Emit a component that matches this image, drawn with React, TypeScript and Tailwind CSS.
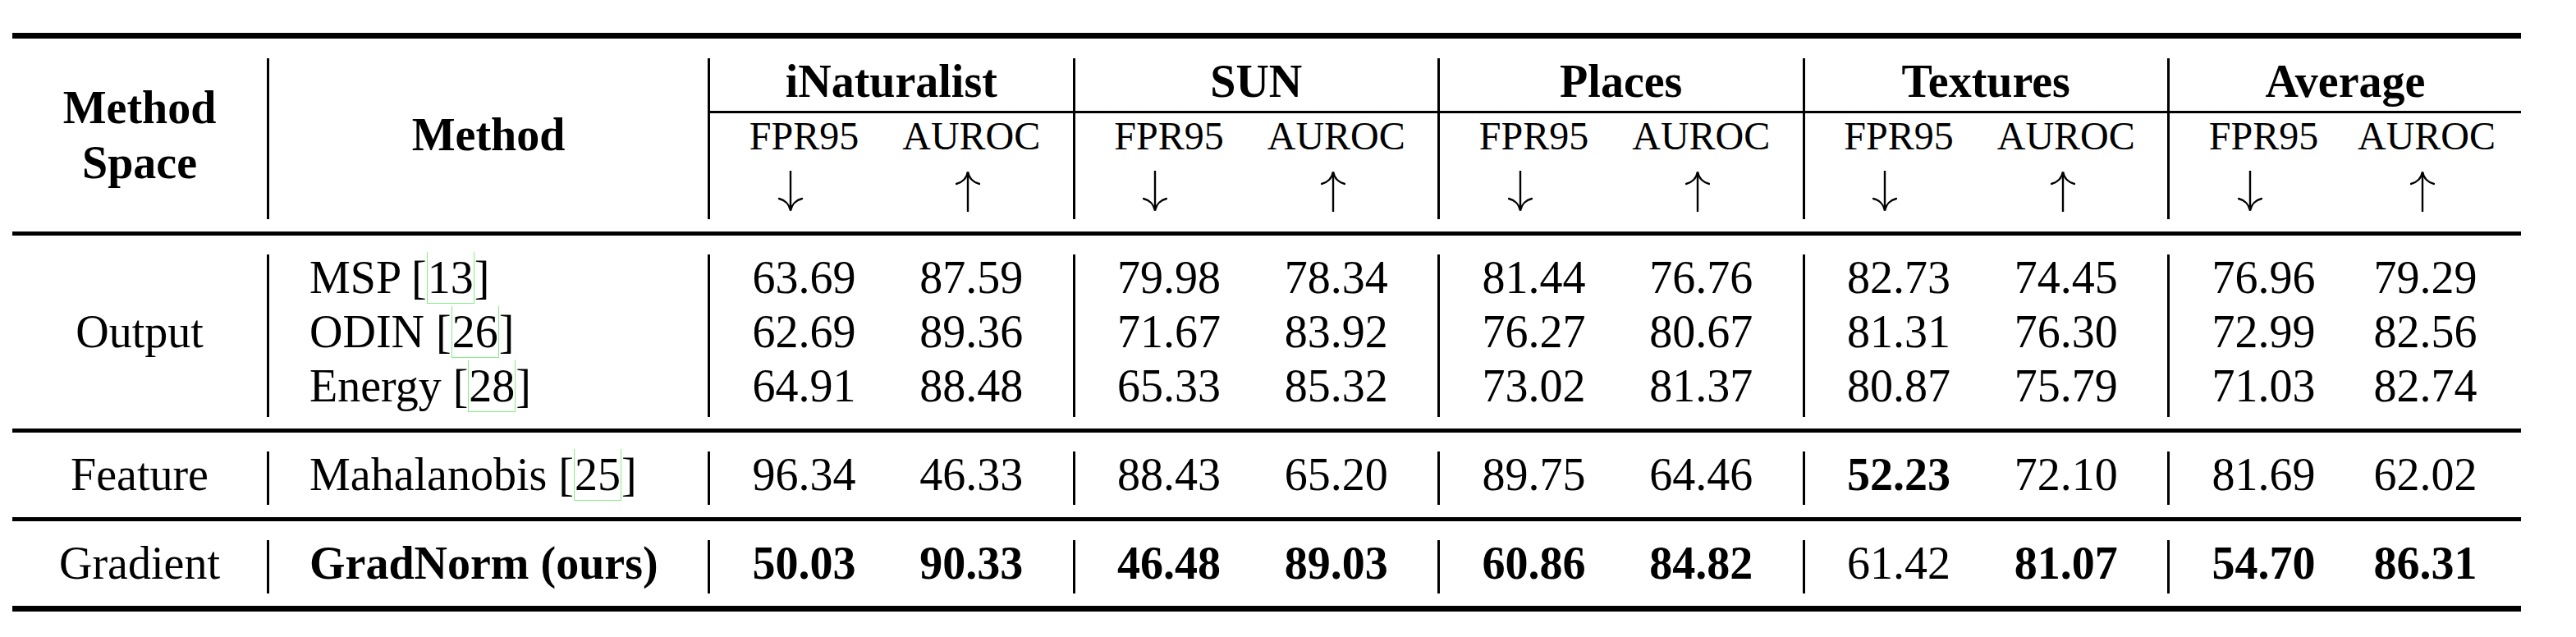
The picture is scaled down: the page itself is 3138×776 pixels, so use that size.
import React from "react";

// results table: OOD detection, ImageNet benchmark
const GROUPS = ["iNaturalist", "SUN", "Places", "Textures", "Average"];

type Row = {
  space?: string;
  method: string;
  cite?: string;
  bold?: boolean;
  vals: string[];
  strong: number[]; // indices of bold values
};

const SECTIONS: Row[][] = [
  [
    {
      method: "MSP",
      cite: "13",
      vals: ["63.69", "87.59", "79.98", "78.34", "81.44", "76.76", "82.73", "74.45", "76.96", "79.29"],
      strong: [],
    },
    {
      space: "Output",
      method: "ODIN",
      cite: "26",
      vals: ["62.69", "89.36", "71.67", "83.92", "76.27", "80.67", "81.31", "76.30", "72.99", "82.56"],
      strong: [],
    },
    {
      method: "Energy",
      cite: "28",
      vals: ["64.91", "88.48", "65.33", "85.32", "73.02", "81.37", "80.87", "75.79", "71.03", "82.74"],
      strong: [],
    },
  ],
  [
    {
      space: "Feature",
      method: "Mahalanobis",
      cite: "25",
      vals: ["96.34", "46.33", "88.43", "65.20", "89.75", "64.46", "52.23", "72.10", "81.69", "62.02"],
      strong: [6],
    },
  ],
  [
    {
      space: "Gradient",
      method: "GradNorm (ours)",
      bold: true,
      vals: ["50.03", "90.33", "46.48", "89.03", "60.86", "84.82", "61.42", "81.07", "54.70", "86.31"],
      strong: [0, 1, 2, 3, 4, 5, 7, 8, 9],
    },
  ],
];

const COLS =
  "grid grid-cols-[310px_537px_232px_212.5px_232px_212.5px_232px_212.5px_232px_212.5px_232px_199px]";

function Arrow({ up }: { up?: boolean }) {
  return (
    <svg width="30" height="50" viewBox="0 0 30 50" className={up ? "block" : "block rotate-180"}>
      <path d="M15 1.5V50" stroke="black" strokeWidth="2.4" fill="none" />
      <path
        d="M1 16C8 14.5 13.5 9 15 1.5C16.5 9 22 14.5 29 16"
        stroke="black"
        strokeWidth="2.4"
        fill="none"
        strokeLinecap="round"
      />
    </svg>
  );
}

function Cite({ n }: { n: string }) {
  return (
    <span>
      [<span className="border-x border-b border-[#86ee86]">{n}</span>]
    </span>
  );
}

function Header() {
  return (
    <div className={`${COLS} grid-rows-[67px_66px_63px]`}>
      <div className="row-span-3 pt-[27px] text-center font-bold leading-[67px]">
        Method
        <br />
        Space
      </div>
      <div className="row-span-3 border-l-[3px] border-black pt-[65px] text-center font-bold leading-[56px]">
        Method
      </div>
      {GROUPS.map((g) => (
        <div
          key={g}
          className="col-span-2 border-l-[3px] border-b-[3px] border-black text-center font-bold leading-[56px]"
        >
          {g}
        </div>
      ))}
      {GROUPS.map((g) => (
        <React.Fragment key={g + "-m"}>
          <div className="border-l-[3px] border-black pt-[4px] text-center text-[48px] leading-[48px]">
            FPR95
          </div>
          <div className="pr-[34px] pt-[4px] text-center text-[48px] leading-[48px]">AUROC</div>
        </React.Fragment>
      ))}
      {GROUPS.map((g) => (
        <React.Fragment key={g + "-a"}>
          <div className="flex justify-center border-l-[3px] border-black pt-[4px]">
            <span className="mr-[34px]">
              <Arrow />
            </span>
          </div>
          <div className="flex justify-center pr-[34px] pt-[4px]">
            <span className="mr-[8px]">
              <Arrow up />
            </span>
          </div>
        </React.Fragment>
      ))}
    </div>
  );
}

function Section({ rows, last }: { rows: Row[]; last?: boolean }) {
  const tall = rows.length > 1;
  return (
    <>
      <div className={tall ? "pt-[23px] pb-[14px]" : "pt-[23px] pb-[15px]"}>
        {rows.map((r) => (
          <div key={r.method} className={`${COLS} ${tall ? "h-[66px]" : "h-[65px]"} leading-[56px]`}>
            <div className="text-center">{r.space}</div>
            <div className={`border-l-[3px] border-black pl-[49px] ${r.bold ? "font-bold" : ""}`}>
              {r.method}
              {r.cite && (
                <>
                  {" "}
                  <Cite n={r.cite} />
                </>
              )}
            </div>
            {r.vals.map((v, i) => (
              <div
                key={i}
                className={`text-center ${i % 2 === 0 ? "border-l-[3px] border-black" : "pr-[34px]"} ${
                  r.strong.includes(i) ? "font-bold" : ""
                }`}
              >
                {v}
              </div>
            ))}
          </div>
        ))}
      </div>
      <div className={last ? "h-[7px] bg-black" : "h-[5px] bg-black"} />
    </>
  );
}

export default function App() {
  return (
    <div className="min-h-[776px] w-[3138px] bg-white pl-[15px] pt-[40px] font-[family-name:'Liberation_Serif',serif] text-[56px] text-black">
      <div className="w-[3056px]">
        <div className="h-[7px] bg-black" />
        <div className="pt-[24px] pb-[15px]">
          <Header />
        </div>
        <div className="h-[5px] bg-black" />
        {SECTIONS.map((s, i) => (
          <Section key={i} rows={s} last={i === SECTIONS.length - 1} />
        ))}
      </div>
    </div>
  );
}
